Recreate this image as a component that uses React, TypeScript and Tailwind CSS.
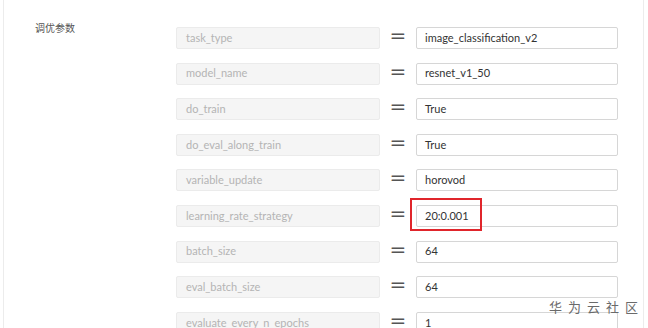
import React from "react";

const rows: [string, string][] = [
  ["task_type", "image_classification_v2"],
  ["model_name", "resnet_v1_50"],
  ["do_train", "True"],
  ["do_eval_along_train", "True"],
  ["variable_update", "horovod"],
  ["learning_rate_strategy", "20:0.001"],
  ["batch_size", "64"],
  ["eval_batch_size", "64"],
  ["evaluate_every_n_epochs", "1"],
];

export default function App() {
  return (
    <div
      className="relative w-[648px] h-[328px] overflow-hidden bg-white"
      style={{ fontFamily: 'Lato, "Noto Sans CJK SC", sans-serif' }}
    >
      <div className="ml-[3px] w-[641px] h-full border-l border-r border-[#ececec] flex">
        <div
          className="w-[172px] shrink-0 pl-[31px] pt-[20px] text-[10px] text-[#555]"
          style={{ fontFamily: '"Noto Sans CJK SC", sans-serif' }}
        >
          调优参数
        </div>
        <div className="flex flex-col gap-[13.6px] pt-[27px]">
          {rows.map(([k, v], i) => (
            <div key={k} className="relative flex items-center h-[22px] shrink-0">
              <div className="w-[204px] h-full shrink-0 bg-[#f5f5f5] border border-[#ebebeb] rounded-[2px] pl-[9px] flex items-center text-[11px] text-[#b4b4b4]">
                {k}
              </div>
              <div className="w-[36px] shrink-0 flex justify-center">
                <span className="text-[20px] leading-none text-[#555] -mt-[6px]" style={{ fontFamily: '"DejaVu Sans", sans-serif' }}>=</span>
              </div>
              <div className="w-[202px] h-full shrink-0 bg-white border border-[#d6d6d6] rounded-[2px] pl-[8px] flex items-center text-[11px] text-[#333]">
                {v}
              </div>
              {i === 5 && (
                <div className="absolute left-[234px] top-[-7px] w-[72px] h-[33px] border-2 border-[#e0252b]" />
              )}
            </div>
          ))}
        </div>
      </div>
      <div className="absolute left-[549px] top-[297px] text-[13px] text-[#6a6a6a] tracking-[6px] whitespace-nowrap" style={{ fontFamily: '"Noto Sans CJK SC", sans-serif' }}>
        华为云社区
      </div>
    </div>
  );
}
